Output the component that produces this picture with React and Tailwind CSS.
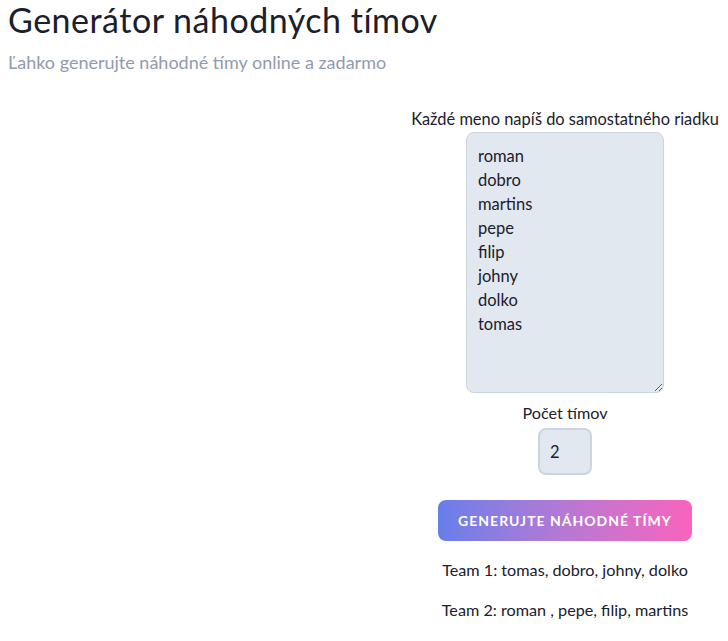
export default function App() {
  const names = ['roman', 'dobro', 'martins', 'pepe', 'filip', 'johny', 'dolko', 'tomas']
  return (
    <div className="min-h-[641px] bg-white text-[#1a202c]" style={{ fontFamily: 'Lato, "Noto Sans", sans-serif' }}>
      <div className="px-2">
        <h1 className="text-[34px] leading-[40px] tracking-[0.5px]">Generátor náhodných tímov</h1>
        <p className="mt-[10px] text-[18px] leading-[24px] text-[#8f9bb0]">Ľahko generujte náhodné tímy online a zadarmo</p>
      </div>
      <div className="flex">
        <div className="w-[402px]" />
        <div className="w-[326px] flex flex-col items-center pt-[33px]">
          <label className="text-[16.4px] leading-[24px] whitespace-nowrap">Každé meno napíš do samostatného riadku</label>
          <textarea
            className="mt-[1px] w-[198px] h-[261px] bg-[#e2e8f0] border border-[#cbd5e0] rounded-lg px-[11px] py-[11px] text-[16.5px] leading-[24px] text-[#1a202c] resize-y outline-none"
            defaultValue={names.join('\n')}
          />
          <label className="mt-[8px] text-[16.2px] leading-[24px]">Počet tímov</label>
          <input
            className="mt-[3px] w-[54px] h-[47px] bg-[#e2e8f0] border-2 border-[#cbd5e0] rounded-lg px-[10px] text-[16.5px] outline-none"
            defaultValue="2"
          />
          <button className="mt-[25px] w-[254px] h-[41px] rounded-lg bg-linear-to-r from-[#667eea] to-[#f962bd] text-white font-bold uppercase tracking-[1px] text-[14px]">
            Generujte náhodné tímy
          </button>
          <p className="mt-[17px] text-[16.2px] leading-[24px]">Team 1: tomas, dobro, johny, dolko</p>
          <p className="mt-[16px] text-[16.2px] leading-[24px]">Team 2: roman , pepe, filip, martins</p>
        </div>
      </div>
    </div>
  )
}
